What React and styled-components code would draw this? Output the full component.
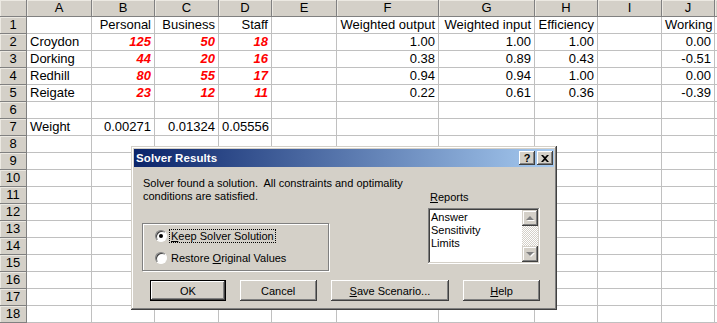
import React from "react";
import styled, { createGlobalStyle, css } from "styled-components";

const GlobalStyle = createGlobalStyle`
  html, body {
    margin: 0;
    padding: 0;
    background: #fff;
    overflow: hidden;
  }
`;

const COLUMNS = ["A", "B", "C", "D", "E", "F", "G", "H", "I", "J", ""];

// each row: cells for columns A..K
const ROWS = [
  ["", "Personal", "Business", "Staff", "", "Weighted output", "Weighted input", "Efficiency", "", "Working"],
  ["Croydon", "125", "50", "18", "", "1.00", "1.00", "1.00", "", "0.00"],
  ["Dorking", "44", "20", "16", "", "0.38", "0.89", "0.43", "", "-0.51"],
  ["Redhill", "80", "55", "17", "", "0.94", "0.94", "1.00", "", "0.00"],
  ["Reigate", "23", "12", "11", "", "0.22", "0.61", "0.36", "", "-0.39"],
  [],
  ["Weight", "0.00271", "0.01324", "0.05556"],
  [], [], [], [], [], [], [], [], [], [], [],
];

const Sheet = styled.div`
  position: relative;
  width: 717px;
  height: 323px;
  overflow: hidden;
  font-family: "Liberation Sans", Arial, sans-serif;
`;

const Grid = styled.div`
  display: grid;
  grid-template-columns: 27px 65px 63px 64px 53px 65px 102px 96px 63px 64px 53px 60px;
  grid-auto-rows: 17px;
`;

const HeaderCell = styled.div`
  box-sizing: border-box;
  background: #d4d0c8;
  border-right: 1px solid #808080;
  border-bottom: 1px solid #808080;
  box-shadow: inset 1px 1px #ece9e2;
  font-size: 13px;
  line-height: 16px;
  color: #000;
  text-align: center;
`;

const Cell = styled.div`
  box-sizing: border-box;
  border-right: 1px solid #c0c0c0;
  border-bottom: 1px solid #c0c0c0;
  font-size: 13px;
  line-height: 16px;
  padding: 0 3px 0 3px;
  white-space: nowrap;
  overflow: hidden;
  text-align: ${(p) => (p.$numeric ? "right" : "left")};
  color: #000;
  ${(p) =>
    p.$input &&
    css`
      color: #ff0000;
      font-weight: bold;
      font-style: italic;
    `}
`;

const isNumeric = (v) => /^-?[\d.]+$/.test(v);

const Dialog = styled.div`
  position: absolute;
  left: 131px;
  top: 146px;
  width: 426px;
  height: 164px;
  box-sizing: border-box;
  padding: 3px;
  background: #d4d0c8;
  box-shadow: inset -1px -1px #404040, inset 1px 1px #d4d0c8,
    inset -2px -2px #808080, inset 2px 2px #fff;
  display: flex;
  flex-direction: column;
  font-family: "Liberation Sans", Arial, sans-serif;
  font-size: 11px;
  color: #000;
`;

const TitleBar = styled.div`
  height: 18px;
  display: flex;
  align-items: center;
  padding: 0 1px 0 2px;
  background: linear-gradient(to right, #0a246a, #a6caf0);
`;

const Title = styled.span`
  color: #fff;
  font-weight: bold;
  font-size: 11.5px;
  letter-spacing: 0.1px;
`;

const TitleButtons = styled.div`
  margin-left: auto;
  display: flex;
  gap: 2px;
`;

const CaptionButton = styled.div`
  width: 16px;
  height: 14px;
  box-sizing: border-box;
  background: #d4d0c8;
  box-shadow: inset -1px -1px #404040, inset 1px 1px #fff,
    inset -2px -2px #808080;
  display: flex;
  align-items: center;
  justify-content: center;
  font-weight: bold;
  font-size: 11px;
  line-height: 14px;
`;

const Body = styled.div`
  padding: 10px 14px 0 8px;
  display: flex;
  flex-direction: column;
`;

const TopArea = styled.div`
  display: flex;
  justify-content: space-between;
`;

const LeftColumn = styled.div`
  display: flex;
  flex-direction: column;
`;

const Message = styled.p`
  margin: 0;
  padding-left: 1px;
  line-height: 13px;
  white-space: pre;
`;

const GroupBox = styled.div`
  margin-top: 20px;
  width: 187px;
  height: 48px;
  box-sizing: border-box;
  border: 1px solid #808080;
  box-shadow: 1px 1px #fff, inset 1px 1px #fff;
  padding: 5px 0 0 12px;
  display: flex;
  flex-direction: column;
  gap: 8px;
`;

const RadioRow = styled.label`
  display: flex;
  align-items: center;
  gap: 3px;
  height: 14px;
`;

const RadioCircle = styled.span`
  position: relative;
  width: 12px;
  height: 12px;
  box-sizing: border-box;
  border-radius: 50%;
  background: #fff;
  border: 1px solid;
  border-color: #808080 #fff #fff #808080;
  box-shadow: inset 1px 1px #404040;
  ${(p) =>
    p.$checked &&
    css`
      &::after {
        content: "";
        position: absolute;
        left: 3px;
        top: 3px;
        width: 4px;
        height: 4px;
        border-radius: 50%;
        background: #000;
      }
    `}
`;

const RadioLabel = styled.span`
  padding: 0 1px;
  line-height: 12px;
  outline: ${(p) => (p.$focused ? "1px dotted #000" : "none")};
`;

const RightColumn = styled.div`
  width: 112px;
  padding-top: 14px;
  display: flex;
  flex-direction: column;
`;

const FieldLabel = styled.div`
  line-height: 13px;
  padding-left: 2px;
  margin-bottom: 4px;
`;

const ListBox = styled.div`
  height: 56px;
  box-sizing: border-box;
  background: #fff;
  box-shadow: inset -1px -1px #fff, inset 1px 1px #808080,
    inset -2px -2px #d4d0c8, inset 2px 2px #404040;
  padding: 2px;
  display: flex;
`;

const ListItems = styled.ul`
  flex: 1;
  margin: 0;
  padding: 1px 0 0 1px;
  list-style: none;
  line-height: 13px;
`;

const ScrollBar = styled.div`
  width: 16px;
  display: flex;
  flex-direction: column;
  background: repeating-conic-gradient(#d4d0c8 0 25%, #fff 0 50%) 0 0 / 2px 2px;
`;

const ScrollButton = styled.div`
  width: 16px;
  height: 16px;
  box-sizing: border-box;
  background: #d4d0c8;
  box-shadow: inset -1px -1px #404040, inset 1px 1px #d4d0c8,
    inset -2px -2px #808080, inset 2px 2px #fff;
  display: flex;
  align-items: center;
  justify-content: center;
  margin-top: ${(p) => (p.$down ? "auto" : "0")};
`;

const Arrow = styled.span`
  width: 0;
  height: 0;
  border-left: 4px solid transparent;
  border-right: 4px solid transparent;
  ${(p) =>
    p.$down
      ? css`
          border-top: 4px solid #808080;
        `
      : css`
          border-bottom: 4px solid #808080;
        `}
  filter: drop-shadow(1px 1px 0 #fff);
`;

const ButtonRow = styled.div`
  margin-top: 9px;
  padding-left: 8px;
  display: flex;
  gap: 14px;
`;

const Button = styled.div`
  width: ${(p) => p.$width}px;
  height: 21px;
  box-sizing: border-box;
  background: #d4d0c8;
  display: flex;
  align-items: center;
  justify-content: center;
  box-shadow: inset -1px -1px #404040, inset 1px 1px #fff,
    inset -2px -2px #808080, inset 2px 2px #d4d0c8;
  ${(p) =>
    p.$default &&
    css`
      border: 1px solid #000;
      box-shadow: inset -1px -1px #404040, inset 1px 1px #fff,
        inset -2px -2px #808080;
    `}
`;

const CloseGlyph = () => (
  <svg width="8" height="7" viewBox="0 0 8 7">
    <path d="M0 0h2l2 2 2-2h2L5 3.5 8 7H6L4 5 2 7H0l3-3.5z" fill="#000" />
  </svg>
);

const SolverResults = () => (
  <Dialog>
    <TitleBar>
      <Title>Solver Results</Title>
      <TitleButtons>
        <CaptionButton>?</CaptionButton>
        <CaptionButton>
          <CloseGlyph />
        </CaptionButton>
      </TitleButtons>
    </TitleBar>
    <Body>
      <TopArea>
        <LeftColumn>
          <Message>
            {"Solver found a solution.  All constraints and optimality\nconditions are satisfied."}
          </Message>
          <GroupBox>
            <RadioRow>
              <RadioCircle $checked />
              <RadioLabel $focused>
                <u>K</u>eep Solver Solution
              </RadioLabel>
            </RadioRow>
            <RadioRow>
              <RadioCircle />
              <RadioLabel>
                Restore <u>O</u>riginal Values
              </RadioLabel>
            </RadioRow>
          </GroupBox>
        </LeftColumn>
        <RightColumn>
          <FieldLabel>
            <u>R</u>eports
          </FieldLabel>
          <ListBox>
            <ListItems>
              <li>Answer</li>
              <li>Sensitivity</li>
              <li>Limits</li>
            </ListItems>
            <ScrollBar>
              <ScrollButton>
                <Arrow />
              </ScrollButton>
              <ScrollButton $down>
                <Arrow $down />
              </ScrollButton>
            </ScrollBar>
          </ListBox>
        </RightColumn>
      </TopArea>
      <ButtonRow>
        <Button $width={76} $default>OK</Button>
        <Button $width={77}>Cancel</Button>
        <Button $width={119}>
          <span>
            <u>S</u>ave Scenario...
          </span>
        </Button>
        <Button $width={77}>
          <span>
            <u>H</u>elp
          </span>
        </Button>
      </ButtonRow>
    </Body>
  </Dialog>
);

export default function App() {
  return (
    <>
      <GlobalStyle />
      <Sheet>
        <Grid>
          <HeaderCell />
          {COLUMNS.map((c, i) => (
            <HeaderCell key={i}>{c}</HeaderCell>
          ))}
          {ROWS.map((row, r) => (
            <React.Fragment key={r}>
              <HeaderCell>{r + 1}</HeaderCell>
              {COLUMNS.map((_, c) => {
                const v = row[c] || "";
                const numeric = r === 0 ? c > 0 : isNumeric(v);
                const input = r >= 1 && r <= 4 && c >= 1 && c <= 3;
                return (
                  <Cell key={c} $numeric={numeric} $input={input}>
                    {v}
                  </Cell>
                );
              })}
            </React.Fragment>
          ))}
        </Grid>
        <SolverResults />
      </Sheet>
    </>
  );
}
